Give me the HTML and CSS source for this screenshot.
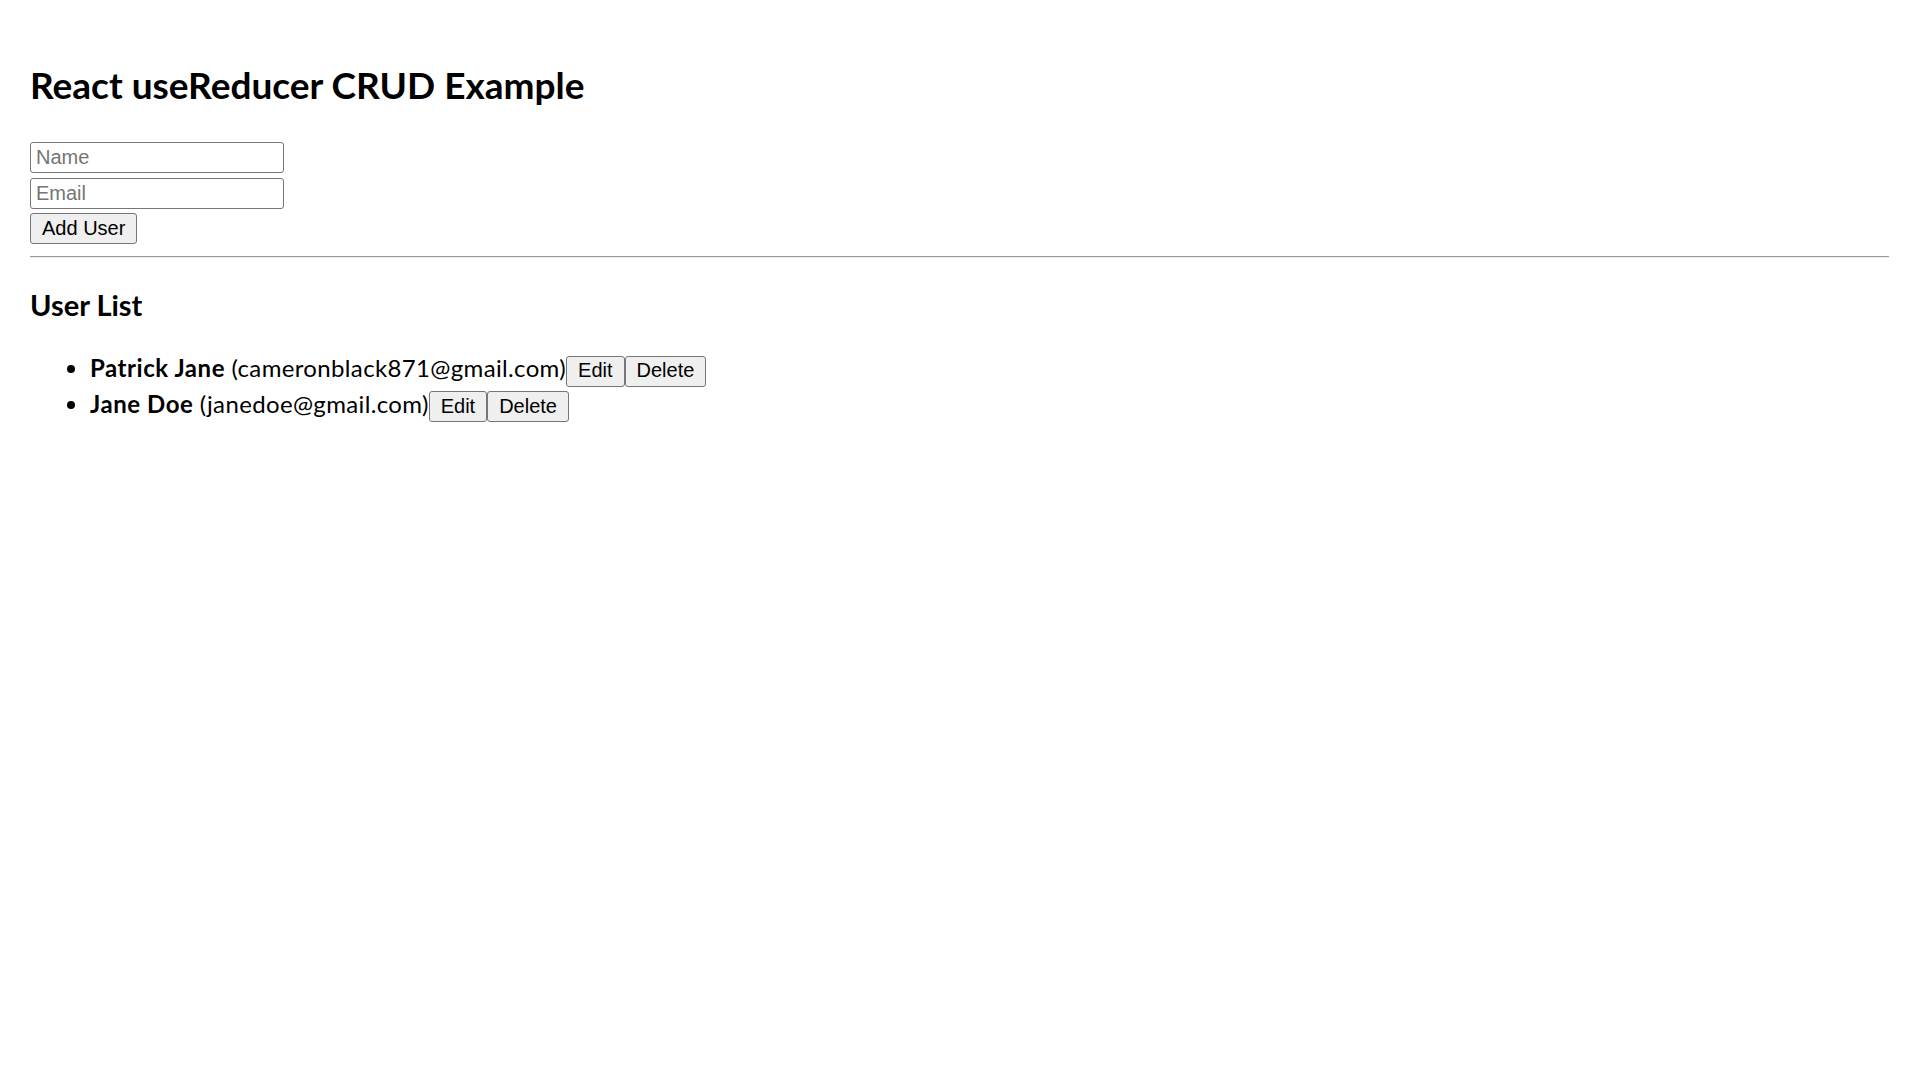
FILE: index.html
```html
<!DOCTYPE html>
<html lang="en">
<head>
<meta charset="utf-8">
<title>React useReducer CRUD Example</title>
<link rel="stylesheet" href="styles.css">
</head>
<body>
<div class="app">
  <h1 class="title">React useReducer CRUD Example</h1>
  <form class="user-form">
    <input class="field" type="text" placeholder="Name">
    <input class="field" type="email" placeholder="Email">
    <button class="btn" type="button">Add User</button>
  </form>
  <hr class="divider">
  <h2 class="subtitle">User List</h2>
  <ul class="user-list">
    <li class="user-item"><strong class="user-name">Patrick Jane</strong> (cameronblack871@gmail.com)<button class="btn" type="button">Edit</button><button class="btn" type="button">Delete</button></li>
    <li class="user-item"><strong class="user-name">Jane Doe</strong> (janedoe@gmail.com)<button class="btn" type="button">Edit</button><button class="btn" type="button">Delete</button></li>
  </ul>
</div>
</body>
</html>
```
FILE: styles.css
```css
html, body {
  margin: 0;
  padding: 0;
  background: #ffffff;
}

body {
  font-family: Lato, "Open Sans", sans-serif;
  font-size: 24px;
  color: #000000;
}

.app {
  padding: 63px 31px 0 30px;
}

.title {
  margin: 0;
  font-size: 37px;
  line-height: 44px;
  font-weight: 700;
}

.user-form {
  display: flex;
  flex-direction: column;
  align-items: flex-start;
  gap: 4.5px;
  margin-top: 35px;
}

.field {
  box-sizing: border-box;
  width: 254px;
  height: 31px;
  margin: 0;
  padding: 2px 5px;
  border: 1px solid #767676;
  border-radius: 3px;
  font-family: "Liberation Sans", Arial, sans-serif;
  font-size: 20px;
  color: #000;
  background: #fff;
}

.field::placeholder {
  color: #757575;
}

.btn {
  box-sizing: border-box;
  height: 31px;
  margin: 0;
  padding: 2.5px 11px 3.5px;
  border: 1px solid #767676;
  border-radius: 3px;
  background: #efefef;
  font-family: "Liberation Sans", Arial, sans-serif;
  font-size: 20px;
  line-height: 23px;
  letter-spacing: 0;
  color: #000;
  vertical-align: baseline;
}

.divider {
  margin: 12px 0 0;
  border: 0;
  border-top: 1px solid #9a9a9a;
  border-bottom: 1px solid #eeeeee;
  height: 0;
}

.subtitle {
  margin: 29px 0 0;
  font-size: 29px;
  line-height: 36px;
  font-weight: 700;
}

.user-list {
  margin: 28px 0 0;
  padding-left: 60px;
}

.user-item {
  line-height: 34px;
  letter-spacing: 0.35px;
}

.user-name {
  letter-spacing: 0.55px;
}
```
